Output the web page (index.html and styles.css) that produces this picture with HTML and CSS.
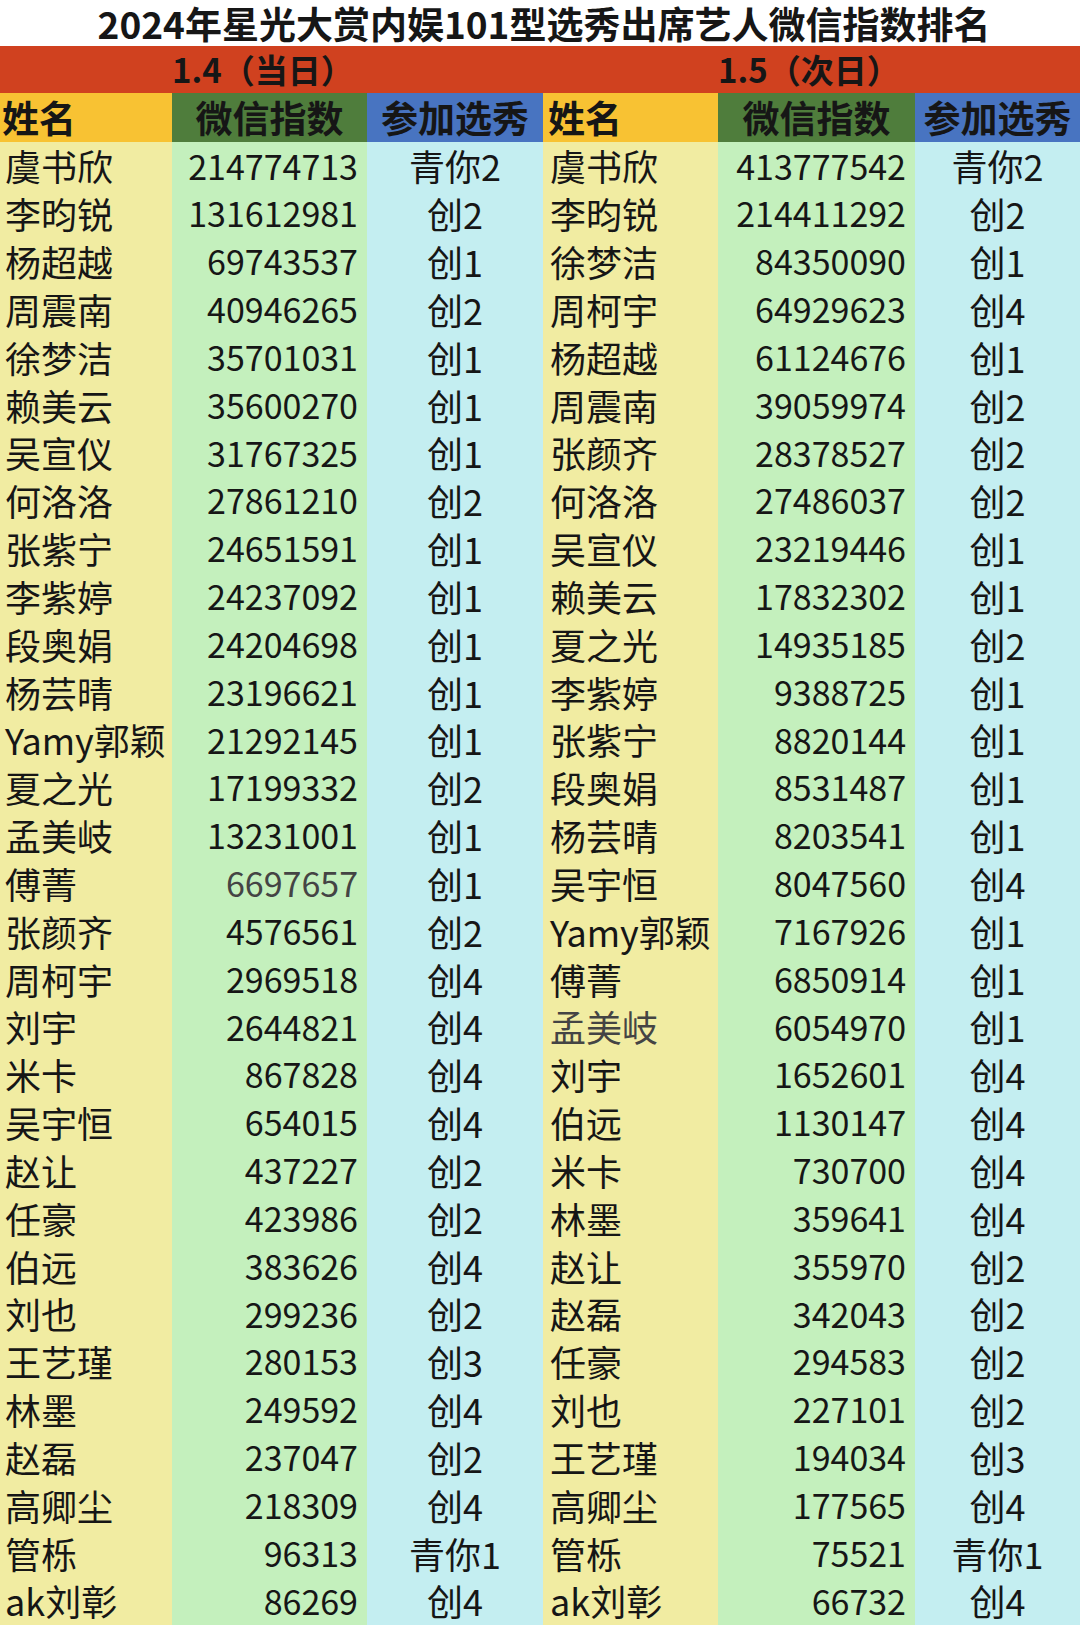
FILE: index.html
```html
<!DOCTYPE html>
<html lang="zh-CN">
<head>
<meta charset="utf-8">
<title>2024年星光大赏内娱101型选秀出席艺人微信指数排名</title>
<link rel="stylesheet" href="styles.css">
</head>
<body>
<div class="sheet">
  <div class="title">2024年星光大赏内娱101型选秀出席艺人微信指数排名</div>
  <div class="band band-left"><span>1.4（当日）</span></div>
  <div class="band band-right"><span>1.5（次日）</span></div>

  <div class="h h-name">姓名</div><div class="h h-num">微信指数</div><div class="h h-show">参加选秀</div>
  <div class="h h-name h-name-r">姓名</div><div class="h h-num">微信指数</div><div class="h h-show">参加选秀</div>

  <div class="c name">虞书欣</div><div class="c num">214774713</div><div class="c show">青你2</div><div class="c name r">虞书欣</div><div class="c num">413777542</div><div class="c show">青你2</div>
  <div class="c name">李昀锐</div><div class="c num">131612981</div><div class="c show">创2</div><div class="c name r">李昀锐</div><div class="c num">214411292</div><div class="c show">创2</div>
  <div class="c name">杨超越</div><div class="c num">69743537</div><div class="c show">创1</div><div class="c name r">徐梦洁</div><div class="c num">84350090</div><div class="c show">创1</div>
  <div class="c name">周震南</div><div class="c num">40946265</div><div class="c show">创2</div><div class="c name r">周柯宇</div><div class="c num">64929623</div><div class="c show">创4</div>
  <div class="c name">徐梦洁</div><div class="c num">35701031</div><div class="c show">创1</div><div class="c name r">杨超越</div><div class="c num">61124676</div><div class="c show">创1</div>
  <div class="c name">赖美云</div><div class="c num">35600270</div><div class="c show">创1</div><div class="c name r">周震南</div><div class="c num">39059974</div><div class="c show">创2</div>
  <div class="c name">吴宣仪</div><div class="c num">31767325</div><div class="c show">创1</div><div class="c name r">张颜齐</div><div class="c num">28378527</div><div class="c show">创2</div>
  <div class="c name">何洛洛</div><div class="c num">27861210</div><div class="c show">创2</div><div class="c name r">何洛洛</div><div class="c num">27486037</div><div class="c show">创2</div>
  <div class="c name">张紫宁</div><div class="c num">24651591</div><div class="c show">创1</div><div class="c name r">吴宣仪</div><div class="c num">23219446</div><div class="c show">创1</div>
  <div class="c name">李紫婷</div><div class="c num">24237092</div><div class="c show">创1</div><div class="c name r">赖美云</div><div class="c num">17832302</div><div class="c show">创1</div>
  <div class="c name">段奥娟</div><div class="c num">24204698</div><div class="c show">创1</div><div class="c name r">夏之光</div><div class="c num">14935185</div><div class="c show">创2</div>
  <div class="c name">杨芸晴</div><div class="c num">23196621</div><div class="c show">创1</div><div class="c name r">李紫婷</div><div class="c num">9388725</div><div class="c show">创1</div>
  <div class="c name">Yamy郭颖</div><div class="c num">21292145</div><div class="c show">创1</div><div class="c name r">张紫宁</div><div class="c num">8820144</div><div class="c show">创1</div>
  <div class="c name">夏之光</div><div class="c num">17199332</div><div class="c show">创2</div><div class="c name r">段奥娟</div><div class="c num">8531487</div><div class="c show">创1</div>
  <div class="c name">孟美岐</div><div class="c num">13231001</div><div class="c show">创1</div><div class="c name r">杨芸晴</div><div class="c num">8203541</div><div class="c show">创1</div>
  <div class="c name">傅菁</div><div class="c num muted">6697657</div><div class="c show">创1</div><div class="c name r">吴宇恒</div><div class="c num">8047560</div><div class="c show">创4</div>
  <div class="c name">张颜齐</div><div class="c num">4576561</div><div class="c show">创2</div><div class="c name r">Yamy郭颖</div><div class="c num">7167926</div><div class="c show">创1</div>
  <div class="c name">周柯宇</div><div class="c num">2969518</div><div class="c show">创4</div><div class="c name r">傅菁</div><div class="c num">6850914</div><div class="c show">创1</div>
  <div class="c name">刘宇</div><div class="c num">2644821</div><div class="c show">创4</div><div class="c name r muted">孟美岐</div><div class="c num">6054970</div><div class="c show">创1</div>
  <div class="c name">米卡</div><div class="c num">867828</div><div class="c show">创4</div><div class="c name r">刘宇</div><div class="c num">1652601</div><div class="c show">创4</div>
  <div class="c name">吴宇恒</div><div class="c num">654015</div><div class="c show">创4</div><div class="c name r">伯远</div><div class="c num">1130147</div><div class="c show">创4</div>
  <div class="c name">赵让</div><div class="c num">437227</div><div class="c show">创2</div><div class="c name r">米卡</div><div class="c num">730700</div><div class="c show">创4</div>
  <div class="c name">任豪</div><div class="c num">423986</div><div class="c show">创2</div><div class="c name r">林墨</div><div class="c num">359641</div><div class="c show">创4</div>
  <div class="c name">伯远</div><div class="c num">383626</div><div class="c show">创4</div><div class="c name r">赵让</div><div class="c num">355970</div><div class="c show">创2</div>
  <div class="c name">刘也</div><div class="c num">299236</div><div class="c show">创2</div><div class="c name r">赵磊</div><div class="c num">342043</div><div class="c show">创2</div>
  <div class="c name">王艺瑾</div><div class="c num">280153</div><div class="c show">创3</div><div class="c name r">任豪</div><div class="c num">294583</div><div class="c show">创2</div>
  <div class="c name">林墨</div><div class="c num">249592</div><div class="c show">创4</div><div class="c name r">刘也</div><div class="c num">227101</div><div class="c show">创2</div>
  <div class="c name">赵磊</div><div class="c num">237047</div><div class="c show">创2</div><div class="c name r">王艺瑾</div><div class="c num">194034</div><div class="c show">创3</div>
  <div class="c name">高卿尘</div><div class="c num">218309</div><div class="c show">创4</div><div class="c name r">高卿尘</div><div class="c num">177565</div><div class="c show">创4</div>
  <div class="c name">管栎</div><div class="c num">96313</div><div class="c show">青你1</div><div class="c name r">管栎</div><div class="c num">75521</div><div class="c show">青你1</div>
  <div class="c name">ak刘彰</div><div class="c num">86269</div><div class="c show">创4</div><div class="c name r">ak刘彰</div><div class="c num">66732</div><div class="c show">创4</div>
</div>
</body>
</html>
```

FILE: styles.css
```css
html, body {
  margin: 0;
  padding: 0;
  background: #ffffff;
}

.sheet {
  width: 1080px;
  height: 1625px;
  display: grid;
  grid-template-columns: 172px 195px 176px 175px 197px 165px;
  grid-template-rows: 46px 47px 49px repeat(31, 1fr);
  font-family: "Noto Sans CJK SC", "Noto Sans", sans-serif;
  color: #161616;
  overflow: hidden;
}

.title {
  grid-column: 1 / -1;
  display: flex;
  align-items: center;
  justify-content: center;
  font-size: 37px;
  font-weight: 700;
  background: #ffffff;
  line-height: 46px;
  padding-left: 8px;
  white-space: nowrap;
}

.band {
  grid-column: span 3;
  background: #d0411f;
  display: flex;
  align-items: center;
  font-size: 33px;
  font-weight: 700;
  line-height: 1.2;
  white-space: nowrap;
}

.band-left {
  padding-left: 172px;
}

.band-right span {
  margin-left: 175px;
}

.h {
  display: flex;
  align-items: center;
  font-size: 37px;
  font-weight: 700;
  line-height: 1.2;
  white-space: nowrap;
}

.h-name {
  background: #f8c233;
  padding-left: 2px;
}

.h-name-r {
  padding-left: 5px;
}

.h-num {
  background: #4f7d3c;
  justify-content: center;
}

.h-show {
  background: #4874c1;
  justify-content: center;
}

.c {
  display: flex;
  align-items: center;
  font-size: 36px;
  line-height: 1.2;
  white-space: nowrap;
}

.name {
  background: #f1eca2;
  padding-left: 5px;
}

.name.r {
  padding-left: 7px;
}

.num {
  background: #c4f0bd;
  justify-content: flex-end;
  padding-right: 9px;
  font-size: 34px;
}

.show {
  background: #c4eef1;
  justify-content: center;
}

.muted {
  color: #444444;
}
```
